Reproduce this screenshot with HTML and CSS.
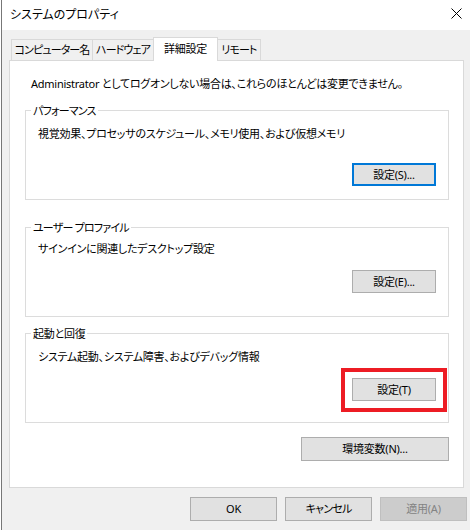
FILE: index.html
```html
<!DOCTYPE html>
<html lang="ja">
<head>
<meta charset="utf-8">
<title>システムのプロパティ</title>
<link rel="stylesheet" href="styles.css">
</head>
<body>
<div class="window">
  <div class="titlebar">
    <span class="title">システムのプロパティ</span>
    <span class="close" aria-label="閉じる">
      <svg width="11" height="11" viewBox="0 0 11 11"><path d="M0.5 0.5 L10.5 10.5 M10.5 0.5 L0.5 10.5" stroke="#000" stroke-width="1" fill="none"/></svg>
    </span>
  </div>
  <div class="client">
    <div class="tabs">
      <div class="tab tab-computer">コンピューター名</div>
      <div class="tab tab-hardware">ハードウェア</div>
      <div class="tab tab-advanced active">詳細設定</div>
      <div class="tab tab-remote">リモート</div>
    </div>
    <div class="panel">
      <p class="note">Administrator としてログオンしない場合は、これらのほとんどは変更できません。</p>
      <fieldset class="group group-perf">
        <legend>パフォーマンス</legend>
        <p class="desc">視覚効果、プロセッサのスケジュール、メモリ使用、および仮想メモリ</p>
        <div class="actions"><button class="btn focused">設定(S)...</button></div>
      </fieldset>
      <fieldset class="group group-profile">
        <legend>ユーザー プロファイル</legend>
        <p class="desc">サインインに関連したデスクトップ設定</p>
        <div class="actions"><button class="btn">設定(E)...</button></div>
      </fieldset>
      <fieldset class="group group-startup">
        <legend>起動と回復</legend>
        <p class="desc">システム起動、システム障害、およびデバッグ情報</p>
        <div class="actions"><span class="highlight"><button class="btn">設定(T)</button></span></div>
      </fieldset>
      <div class="actions env"><button class="btn btn-env">環境変数(N)...</button></div>
    </div>
    <div class="footer">
      <button class="btn btn-dialog">OK</button>
      <button class="btn btn-dialog btn-kana">キャンセル</button>
      <button class="btn btn-dialog" disabled>適用(A)</button>
    </div>
  </div>
</div>
</body>
</html>
```

FILE: styles.css
```css
html, body {
  margin: 0;
  padding: 0;
  background: #ffffff;
}
body {
  width: 470px;
  height: 530px;
  overflow: hidden;
  font-family: "Noto Sans", "Noto Sans CJK JP", sans-serif;
  font-size: 11px;
  letter-spacing: -0.25px;
  color: #000;
  font-feature-settings: "palt";
}
.window {
  margin-left: 1px;
  border-left: 1px solid #777777;
  height: 530px;
  display: flex;
  flex-direction: column;
}
.titlebar {
  height: 30px;
  background: #ffffff;
  display: flex;
  align-items: center;
  justify-content: space-between;
  padding: 0 8px 2px 8px;
  box-sizing: border-box;
}
.title {
  font-family: "Noto Sans CJK JP", sans-serif;
  font-size: 12px;
  letter-spacing: 0;
  line-height: 16px;
}
.close {
  display: flex;
  width: 11px;
  height: 11px;
  margin-top: -2px;
}
.client {
  flex: 1;
  background: #f0f0f0;
}
.tabs {
  display: flex;
  align-items: flex-end;
  height: 23px;
  margin-top: 7px;
  padding-left: 9px;
  position: relative;
  z-index: 1;
}
.tab {
  box-sizing: border-box;
  height: 21px;
  border: 1px solid #d9d9d9;
  border-bottom: none;
  background: #f0f0f0;
  display: flex;
  align-items: center;
  justify-content: center;
  line-height: 16px;
  white-space: nowrap;
  letter-spacing: -0.9px;
  margin-left: -1px;
}
.tab:first-child { margin-left: 0; }
.tab-computer { width: 82px; }
.tab-hardware { width: 62px; }
.tab-advanced { width: 65px; letter-spacing: -0.25px; }
.tab-remote { width: 44px; }
.tab.active {
  height: 24px;
  margin-bottom: -1px;
  background: #ffffff;
  padding-bottom: 2px;
  position: relative;
  z-index: 2;
}
.panel {
  box-sizing: border-box;
  margin-left: 7px;
  width: 455px;
  height: 428px;
  background: #ffffff;
  border: 1px solid #d9d9d9;
  padding: 15px 14px 0 15px;
}
.note {
  margin: 0 0 0 6px;
  line-height: 16px;
  white-space: nowrap;
}
.group {
  margin: 0;
  border: 1px solid #dcdcdc;
  padding: 0 12px;
  min-width: 0;
}
.group legend {
  padding: 0 2px;
  margin-left: -7px;
  line-height: 15px;
  letter-spacing: -0.8px;
}
.group-startup legend {
  letter-spacing: -0.25px;
}
.desc {
  margin: 0;
  line-height: 16px;
}
.actions {
  display: flex;
  justify-content: flex-end;
}
.group-perf { margin-top: 11px; padding-bottom: 13px; }
.group-perf .desc { margin-top: 8px; }
.group-perf .actions { margin-top: 21px; }
.group-profile { margin-top: 20px; padding-bottom: 23px; }
.group-profile .desc { margin-top: 6px; }
.group-profile .actions { margin-top: 13px; }
.group-startup { margin-top: 9px; padding-bottom: 21px; }
.group-startup .desc { margin-top: 8px; }
.group-startup .actions { margin-top: 13px; }
.btn {
  box-sizing: border-box;
  width: 84px;
  height: 23px;
  padding: 0;
  margin: 0;
  background: #e1e1e1;
  border: 1px solid #adadad;
  font-family: inherit;
  font-size: 11px;
  letter-spacing: -0.25px;
  font-feature-settings: "palt";
  color: #000;
  line-height: 16px;
}
.btn.focused {
  border: 2px solid #0078d7;
}
.btn:disabled {
  background: #cccccc;
  border-color: #bfbfbf;
  color: #838383;
}
.btn-kana {
  letter-spacing: -0.8px;
}
.highlight {
  position: relative;
  display: flex;
}
.highlight::after {
  content: "";
  position: absolute;
  left: -11px;
  right: -11px;
  top: -10px;
  bottom: -11px;
  border: 4px solid #ed1c24;
  pointer-events: none;
}
.env {
  margin-top: 14px;
}
.btn-env {
  width: 148px;
  height: 24px;
}
.footer {
  display: flex;
  justify-content: flex-end;
  gap: 8px;
  margin-top: 9px;
  padding-right: 3px;
}
.btn-dialog {
  width: 87px;
  height: 24px;
}
```
